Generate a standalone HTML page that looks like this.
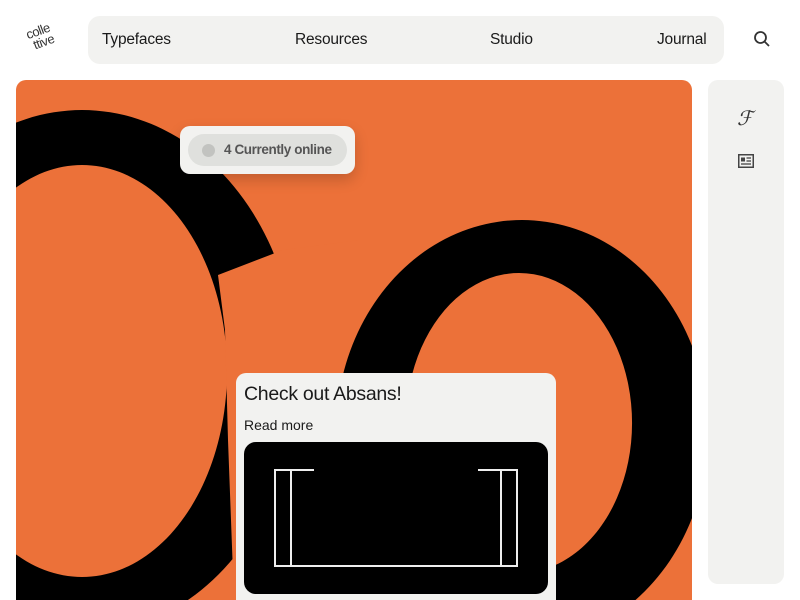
<!DOCTYPE html>
<html><head><meta charset="utf-8"><style>
*{margin:0;padding:0;box-sizing:border-box}
html,body{width:800px;height:600px;overflow:hidden}
body{background:#fff;font-family:"Liberation Sans",sans-serif;position:relative;color:#1a1a1a}
.nav{position:absolute;left:88px;top:16px;width:636px;height:48px;background:#f2f2f0;border-radius:12px}
.nav span{position:absolute;top:15px;font-size:15.5px;letter-spacing:-0.2px}
.side{position:absolute;left:708px;top:80px;width:76px;height:504px;background:#f2f2f0;border-radius:10px}
.hero{position:absolute;left:16px;top:80px;width:676px;height:520px;border-radius:10px 10px 0 0;overflow:hidden;background:#ec7139}
.pop{position:absolute;left:180px;top:126px;width:175px;height:48px;background:#f2f2f0;border-radius:10px;box-shadow:0 6px 14px rgba(0,0,0,.18)}
.pill{position:absolute;left:8px;top:8px;width:159px;height:32px;background:#dfe0dd;border-radius:16px}
.dot{position:absolute;left:14px;top:10px;width:13px;height:13px;border-radius:50%;background:#c2c3c0}
.pill b{position:absolute;left:36px;top:8px;font-size:13.5px;color:#555;letter-spacing:-0.4px}
.card{position:absolute;left:236px;top:373px;width:320px;height:227px;background:#f2f2f0;border-radius:10px 10px 0 0}
.card h2{position:absolute;left:8px;top:10px;font-size:19.5px;font-weight:normal;letter-spacing:-0.3px}
.card p{position:absolute;left:8px;top:44px;font-size:14px}
.img{position:absolute;left:8px;top:69px;width:304px;height:152px;background:#000;border-radius:12px;overflow:hidden}
</style></head><body>
<div style="position:absolute;left:28px;top:25px;font-size:13px;line-height:12px;color:#333;transform:rotate(-20deg);letter-spacing:-0.5px">colle<br>&nbsp;ttive</div>
<div class="nav"><span style="left:14px">Typefaces</span><span style="left:207px">Resources</span><span style="left:402px">Studio</span><span style="left:569px">Journal</span></div>
<svg style="position:absolute;left:752px;top:29px" width="20" height="20" viewBox="0 0 20 20"><circle cx="8.5" cy="8.5" r="5.5" fill="none" stroke="#333" stroke-width="1.8"/><line x1="12.5" y1="12.5" x2="17" y2="17" stroke="#333" stroke-width="1.8"/></svg>
<div class="side">
<div style="position:absolute;left:29px;top:26px;font-family:'Liberation Serif',serif;font-style:italic;font-size:20px;color:#333">&#x2131;</div>
<svg style="position:absolute;left:30px;top:74px" width="16" height="14" viewBox="0 0 16 14"><rect x="0.75" y="0.75" width="14.5" height="12.5" fill="none" stroke="#444" stroke-width="1.5"/><rect x="3" y="3.5" width="4" height="4" fill="#444"/><line x1="8.5" y1="4" x2="13" y2="4" stroke="#444" stroke-width="1.3"/><line x1="8.5" y1="7" x2="13" y2="7" stroke="#444" stroke-width="1.3"/><line x1="3" y1="10" x2="13" y2="10" stroke="#444" stroke-width="1.3"/></svg>
</div>
<div class="hero">
<svg width="676" height="520" viewBox="16 80 676 520" style="position:absolute;left:0;top:0">
<path fill="#000" fill-rule="evenodd" d="M82,110 a215,262 0 1,0 0.1,0 Z M82,165 a145,206 0 1,0 0.1,0 Z"/>
<polygon fill="#ec7139" points="283,250 218,275 225,330 228,440 234,600 360,600 360,240"/>
<path fill="#000" fill-rule="evenodd" d="M522,220 a186,212 0 1,0 0.1,0 Z M519,273 a113,150 0 1,0 0.1,0 Z"/>
</svg>
</div>
<div class="pop"><div class="pill"><div class="dot"></div><b>4 Currently online</b></div></div>
<div class="card"><h2>Check out Absans!</h2><p>Read more</p>
<div class="img"><svg width="304" height="152" viewBox="0 0 304 152">
<g fill="none" stroke="#eee" stroke-width="2">
<polyline points="70,28 31,28 31,124 273,124 273,28 234,28"/>
<line x1="47" y1="28" x2="47" y2="124"/><line x1="257" y1="28" x2="257" y2="124"/>
</g></svg></div></div>
</body></html>
